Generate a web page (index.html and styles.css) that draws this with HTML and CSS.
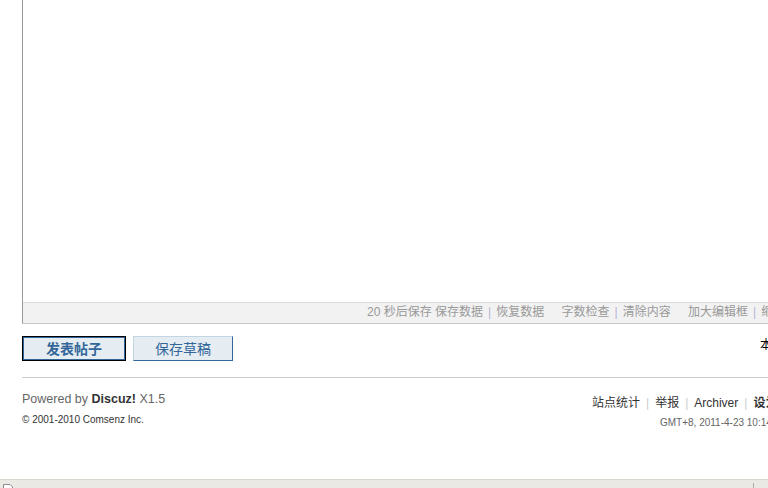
FILE: index.html
```html
<!DOCTYPE html>
<html lang="zh-CN">
<head>
    <meta charset="UTF-8">
    <title>发表帖子</title>
    <link rel="stylesheet" href="styles.css">
</head>
<body>

    <div id="wrap">
        <div class="editor">
            <div class="editor-area"></div>
            <div class="editor-bar">
                <span>20 秒后保存</span>
                <span>保存数据</span><i class="pipe">|</i><span>恢复数据</span>
                <span class="gap">字数检查</span><i class="pipe">|</i><span>清除内容</span>
                <span class="gap">加大编辑框</span><i class="pipe">|</i><span>缩小编辑框</span>
            </div>
        </div>

        <div class="post-row">
            <button class="btn btn-main">发表帖子</button>
            <button class="btn">保存草稿</button>
            <span class="post-note">本版积分规则</span>
        </div>

        <div class="footer">
            <div class="footer-left">
                <p class="powered">Powered by <strong>Discuz!</strong> X1.5</p>
                <p class="copy">&copy; 2001-2010 Comsenz Inc.</p>
            </div>
            <div class="footer-right">
                <p class="links">
                    <a>站点统计</a><i class="pipe">|</i><a>举报</a><i class="pipe">|</i><a>Archiver</a><i class="pipe">|</i><a class="bold">设为首页</a>
                </p>
                <p class="time">GMT+8, 2011-4-23 10:14, Processed in 0.031 second(s)</p>
            </div>
        </div>
    </div>

    <div class="statusbar">
        <svg class="status-icon" width="12" height="9" viewBox="0 0 12 9">
            <path d="M1.5 8.5 V1.5 H8 L10.5 4 V8.5" fill="#fff" stroke="#8a8a8a"/>
        </svg>
        <span class="status-sep"></span>
    </div>

</body>
</html>
```

FILE: styles.css
```css
body {
    margin: 0;
    padding: 0;
    overflow: hidden;
    background: #fff;
    font: 12px/1.5 "Liberation Sans", "Noto Sans CJK SC", sans-serif;
    color: #333;
}

p {
    margin: 0;
}

i {
    font-style: normal;
}

#wrap {
    width: 960px;
    margin-left: 22px;
}

/* --- editor --- */
.editor {
    border-left: 1px solid #999;
    border-bottom: 1px solid #c8c8c8;
}

.editor-area {
    height: 302px;
}

.editor-bar {
    height: 20px;
    line-height: 19px;
    border-top: 1px solid #ddd;
    background: #f2f2f2;
    color: #999;
    padding-left: 344px;
    white-space: nowrap;
}

.editor-bar .gap {
    margin-left: 14px;
}

.pipe {
    color: #b9b2d9;
    margin: 0 5px;
}

/* --- post buttons --- */
.post-row {
    display: flex;
    align-items: center;
    gap: 7px;
    margin-top: 12px;
    height: 25px;
}

.btn {
    width: 100px;
    height: 25px;
    padding: 0;
    background: #e5edf2;
    border: 1px solid;
    border-color: #c2d5e3 #369 #369 #c2d5e3;
    color: #369;
    font: 14px/23px "Noto Sans CJK SC", sans-serif;
}

.btn-main {
    width: 104px;
    font-weight: bold;
    border-color: #000;
    box-shadow: inset 0 0 0 1px #336699;
}

.post-note {
    align-self: flex-start;
    margin-left: auto;
    margin-right: 150px;
    color: #000;
}

/* --- footer --- */
.footer {
    display: flex;
    justify-content: space-between;
    border-top: 1px solid #ccc;
    margin-top: 16px;
    padding-top: 12px;
}

.powered {
    color: #666;
    font-size: 12.5px;
}

.powered strong {
    color: #333;
}

.copy {
    font-size: 10px;
    margin-top: 3px;
}

.footer-right {
    width: 390px;
    padding-top: 4px;
    white-space: nowrap;
}

.links a {
    color: #333;
}

.links .bold {
    font-weight: bold;
}

.links .pipe {
    color: #ccc;
    margin: 0 6px;
}

.time {
    font-size: 10px;
    color: #666;
    margin-top: 3px;
    padding-left: 68px;
}

/* --- status bar --- */
.statusbar {
    position: fixed;
    left: 0;
    right: 0;
    bottom: 0;
    height: 8px;
    border-top: 1px solid #d8d6cf;
    background: #ebe9e3;
}

.status-icon {
    position: absolute;
    left: 2px;
    top: 3px;
}

.status-sep {
    position: absolute;
    left: 753px;
    top: 3px;
    width: 1px;
    height: 5px;
    background: #aaa;
}
```
